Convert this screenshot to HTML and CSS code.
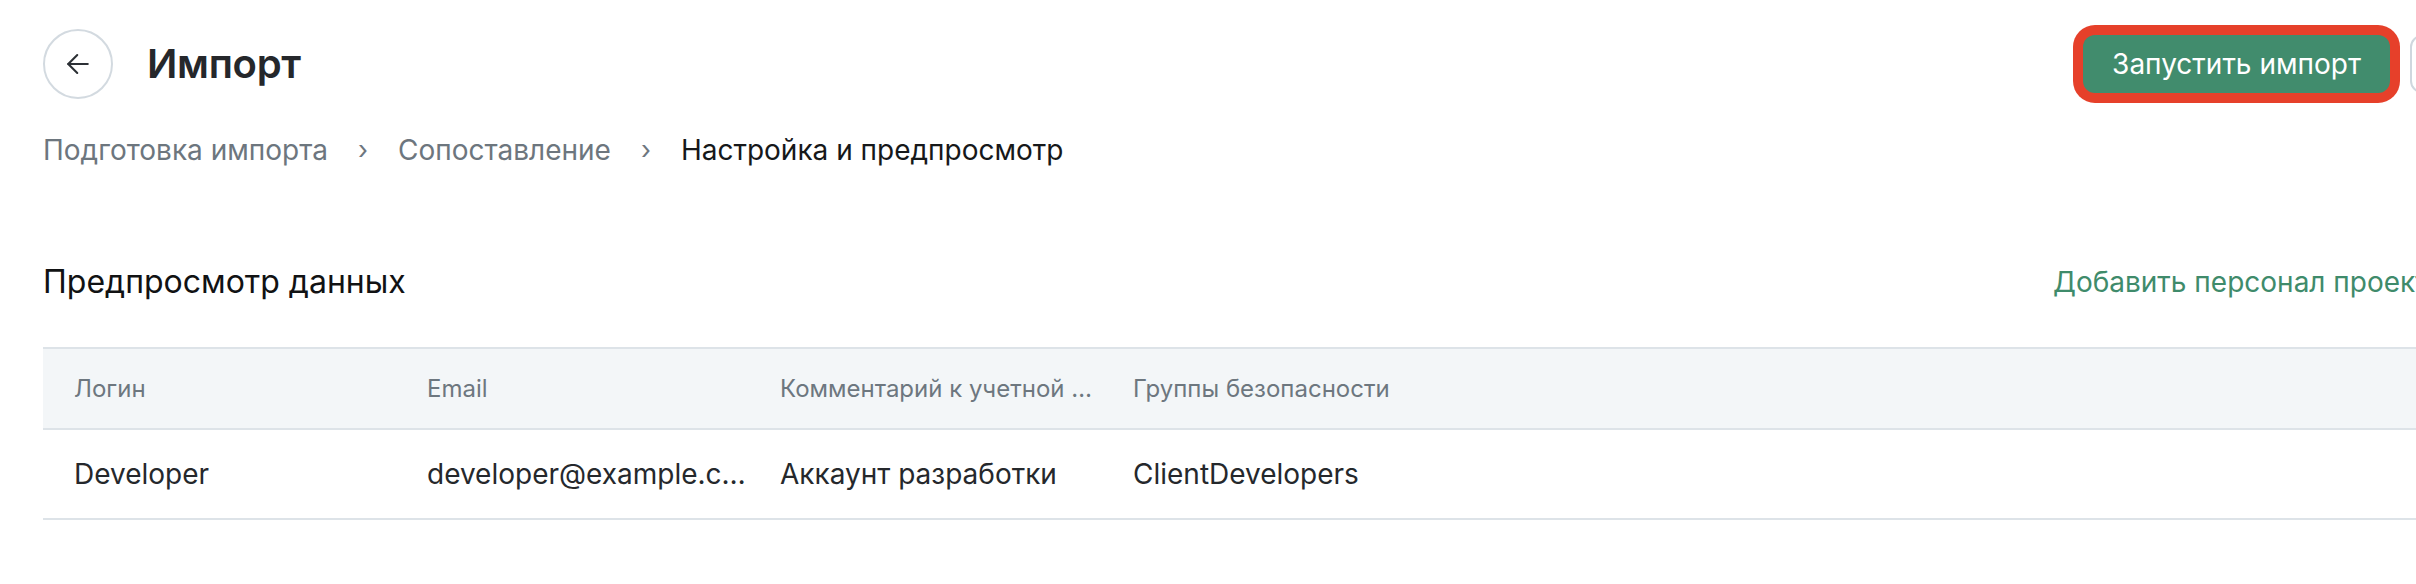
FILE: index.html
```html
<!DOCTYPE html>
<html lang="ru">
<head>
<meta charset="utf-8">
<title>Импорт</title>
<link rel="stylesheet" href="styles.css">
</head>
<body>
<div class="page">
  <header class="topbar">
    <div class="topbar-left">
      <button class="back" type="button" aria-label="Назад">
        <svg width="36" height="36" viewBox="0 0 24 24" fill="none" stroke="currentColor" stroke-width="1.4" stroke-linecap="round" stroke-linejoin="round">
          <path d="M18.5 12H5.5"/>
          <path d="M11.5 6L5.5 12l6 6"/>
        </svg>
      </button>
      <h1 class="title">Импорт</h1>
    </div>
    <div class="actions">
      <button class="btn btn-primary" type="button">Запустить импорт</button>
      <button class="btn btn-secondary" type="button">Отмена</button>
    </div>
  </header>

  <nav class="crumbs">
    <span class="crumb">Подготовка импорта</span>
    <span class="crumb-sep">›</span>
    <span class="crumb">Сопоставление</span>
    <span class="crumb-sep">›</span>
    <span class="crumb crumb-current">Настройка и предпросмотр</span>
  </nav>

  <section class="preview">
    <div class="preview-head">
      <h2 class="preview-title">Предпросмотр данных</h2>
      <a class="preview-link" href="#">Добавить персонал проекта</a>
    </div>

    <div class="grid">
      <div class="row row-head">
        <div class="cell">Логин</div>
        <div class="cell">Email</div>
        <div class="cell">Комментарий к учетной записи</div>
        <div class="cell">Группы безопасности</div>
        <div class="cell"></div>
      </div>
      <div class="row">
        <div class="cell">Developer</div>
        <div class="cell">developer@example.com</div>
        <div class="cell">Аккаунт разработки</div>
        <div class="cell">ClientDevelopers</div>
        <div class="cell"></div>
      </div>
    </div>
  </section>
</div>
</body>
</html>
```

FILE: styles.css
```css
html, body {
  margin: 0;
  padding: 0;
  background: #ffffff;
  overflow: hidden;
}

body {
  font-family: Inter, "Noto Sans", "Liberation Sans", sans-serif;
  color: #25282c;
}

.page {
  box-sizing: border-box;
  width: 2620px;
  padding: 28px 43px 0;
}

/* Top bar: back button + title, actions on the right */
.topbar {
  display: flex;
  align-items: center;
  justify-content: space-between;
  height: 71px;
}

.topbar-left {
  display: flex;
  align-items: center;
}

.back {
  box-sizing: border-box;
  width: 70px;
  height: 70px;
  border-radius: 50%;
  border: 2px solid #d3dae0;
  background: #fff;
  color: #2c3035;
  display: flex;
  align-items: center;
  justify-content: center;
  padding: 0;
}

.title {
  margin: 0 0 0 34px;
  font-size: 40px;
  font-weight: 600;
  line-height: 48px;
  color: #25272b;
  letter-spacing: -0.3px;
}

.actions {
  display: flex;
  align-items: center;
  gap: 20px;
}

.btn {
  box-sizing: border-box;
  height: 58px;
  padding: 0 29px;
  border-radius: 12px;
  font-family: inherit;
  font-size: 28px;
  line-height: 1;
}

.btn-primary {
  background: #418c6d;
  color: #ffffff;
  border: none;
  box-shadow: 0 0 0 10px #e6402a;
}

.btn-secondary {
  background: #ffffff;
  color: #25282c;
  border: 2px solid #cfd7de;
}

/* Step breadcrumbs */
.crumbs {
  display: flex;
  align-items: center;
  margin-top: 31px;
  font-size: 28px;
  line-height: 40px;
}

.crumb {
  color: #6d767e;
}

.crumb-current {
  color: #16181a;
}

.crumb-sep {
  color: #6d767e;
  font-size: 26px;
  margin: 0 30px;
}

/* Preview section */
.preview-head {
  display: flex;
  align-items: center;
  justify-content: space-between;
  margin-top: 90px;
}

.preview-title {
  margin: 0;
  font-size: 32px;
  font-weight: 400;
  line-height: 44px;
  color: #111213;
}

.preview-link {
  font-size: 28px;
  line-height: 40px;
  color: #3f8b6b;
  text-decoration: none;
  margin-right: 133px;
}

.grid {
  margin-top: 43px;
  border-top: 2px solid #dde3e8;
}

.row {
  display: grid;
  grid-template-columns: 353px 353px 353px 353px 1fr;
  align-items: center;
  height: 90px;
  border-bottom: 2px solid #dde3e8;
  box-sizing: border-box;
  font-size: 28px;
  color: #25282c;
}

.row-head {
  height: 81px;
  background: #f3f6f8;
  font-size: 24px;
  color: #6d777f;
}

.cell {
  padding: 0 0 0 31px;
  white-space: nowrap;
  overflow: hidden;
  text-overflow: ellipsis;
}
```
